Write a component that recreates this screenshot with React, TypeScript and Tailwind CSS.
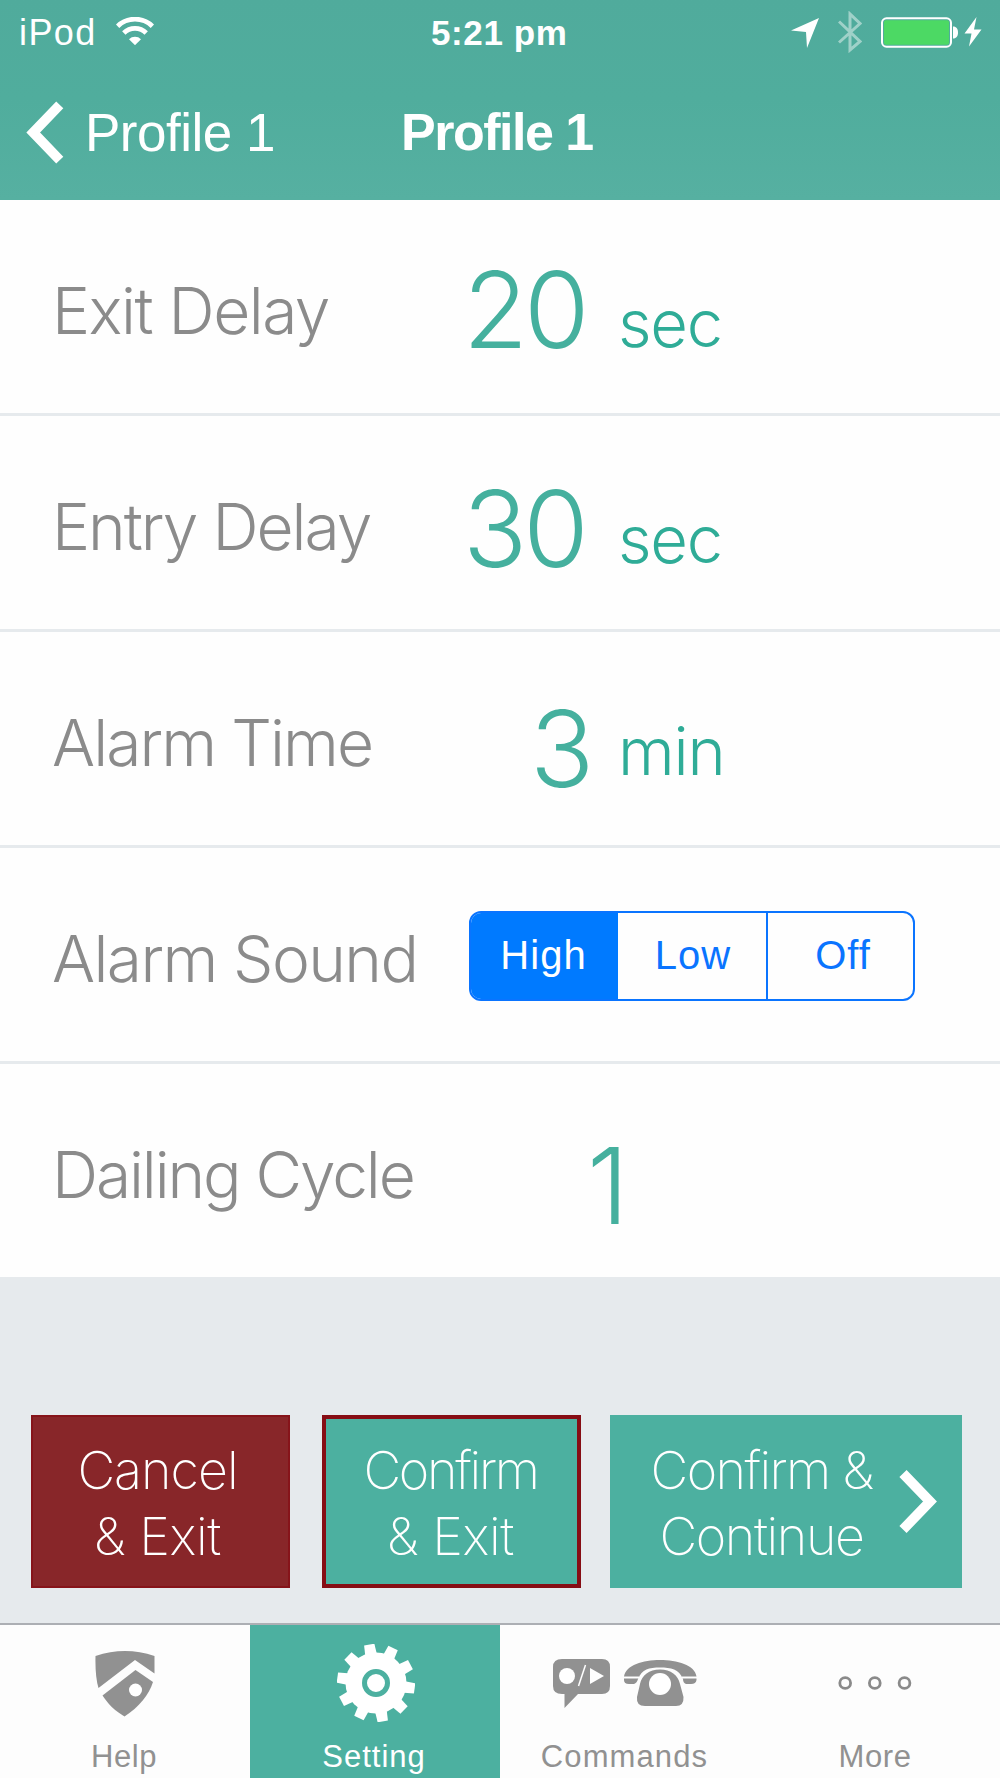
import type { ReactNode } from 'react'

const Chevron = ({ className }: { className: string }) => (
  <svg viewBox="0 0 38 64" className={className} fill="none" stroke="currentColor" strokeWidth="10">
    <path d="M34 4 7 32l27 28" />
  </svg>
)

const StatusBar = () => (
  <div className="flex h-[64px] text-white">
    <div className="flex w-[431px] pl-[19px] pt-[15px]">
      <span className="w-[97px] text-[36px] leading-none tracking-[1.4px]">iPod</span>
      <svg viewBox="0 0 38 28" className="mt-0.5 h-7 w-[38px]" fill="none" stroke="currentColor" strokeWidth="4.8">
        <path d="M1.6 9.2a25 25 0 0 1 34.8 0" />
        <path d="M7.8 16a16 16 0 0 1 22.4 0" />
        <path d="M13 22.2a8.6 8.6 0 0 1 12 0l-6 6z" fill="currentColor" stroke="none" />
      </svg>
    </div>
    <span className="w-[360px] pt-[15px] text-[35px] font-bold leading-none tracking-[0.6px]">
      5:21 pm
    </span>
    <svg viewBox="0 0 28 30" className="mt-[18px] h-[30px] w-[28px]" fill="currentColor">
      <path d="M28 0 16 30 15 14 0 12.5z" />
    </svg>
    <svg viewBox="0 0 24 42" className="ml-[19px] mt-[11px] h-[42px] w-6 opacity-45" fill="none" stroke="currentColor" strokeWidth="3">
      <path d="M1 10.5 22 30.5 12 39V3l10 9.5L1 31.5" />
    </svg>
    <svg viewBox="0 0 104 32" className="ml-[18px] mt-[17px] h-8 w-[104px]">
      <rect x="2" y="1.3" width="69" height="28.4" rx="4.5" fill="none" stroke="white" strokeWidth="2" />
      <rect x="4" y="3.3" width="65" height="24.4" rx="2" fill="#4cd964" />
      <path d="M73 9.5c3.5 0 5 2.5 5 6s-1.5 6-5 6z" fill="white" />
      <path d="M96.5 0 84.5 16.5h7L89 29.5l12.500-17h-7.500z" fill="white" />
    </svg>
  </div>
)

const Header = () => (
  <header className="h-[200px] bg-linear-to-b from-[#50ab9c] via-[#50ad9d] to-[#56b0a1] text-white">
    <StatusBar />
    <div className="flex">
      <Chevron className="ml-[26px] mt-[37px] h-[63px] w-[38px]" />
      <span className="ml-[21px] w-[316px] pt-[42px] text-[53px] leading-none tracking-[-0.5px]">Profile 1</span>
      <h1 className="pt-[42px] text-[52px] font-bold leading-none tracking-[-1.5px]">Profile 1</h1>
    </div>
  </header>
)

const Row = ({ label, labelClass, children }: { label: string; labelClass: string; children: ReactNode }) => (
  <div className="flex h-[216px] border-b-[3px] border-[#e6eaed] bg-[#fefefe] font-['Inter',sans-serif] font-light last:h-[213px] last:border-b-0">
    <div className={`w-[463px] whitespace-nowrap pl-[52px] pt-[79px] text-[64px] leading-none text-[#8b8b8b] ${labelClass}`}>
      {label}
    </div>
    {children}
  </div>
)

const Value = ({ className, children }: { className: string; children: ReactNode }) => (
  <span className={`text-[106px] font-light leading-none tracking-[-4px] text-[#45b09e] ${className}`}>{children}</span>
)

const Unit = ({ className, children }: { className: string; children: ReactNode }) => (
  <span className={`text-[65px] font-light leading-none tracking-[-1.2px] text-[#2fac97] ${className}`}>{children}</span>
)

const SoundPicker = () => (
  <div className="ml-[6px] mt-[63px] flex h-[90px] w-[446px] overflow-hidden rounded-xl border-[2.5px] border-[#0a74ff] font-['Liberation_Sans',sans-serif] text-[40px] leading-[85px] font-normal tracking-[1px] text-[#0a74ff]">
    <div className="w-[147px] bg-[#007aff] pr-[2px] text-center text-white">High</div>
    <div className="w-[150px] border-r-2 border-[#0a74ff] pl-[2px] text-center">Low</div>
    <div className="flex-1 pl-[5px] text-center">Off</div>
  </div>
)

const buttonText = "font-['Inter',sans-serif] text-[52px] font-extralight leading-[66px] text-center"

const Actions = () => (
  <div className="flex h-[346px] bg-[#e6eaed] pl-[31px] pt-[138px] text-white">
    <button className={`h-[173px] w-[259px] border-2 border-[#86141a] bg-[#882629] pr-[6px] pt-[4px] ${buttonText}`}>
      <span className="tracking-[-1px]">Cancel</span>
      <br />
      <span className="tracking-[-0.4px]">& Exit</span>
    </button>
    <button className={`ml-8 h-[173px] w-[259px] border-4 border-[#860d14] bg-[#4cb0a0] pr-[2px] pt-[4px] ${buttonText}`}>
      <span className="tracking-[-2.3px]">Confirm</span>
      <br />
      <span className="tracking-[-0.4px]">& Exit</span>
    </button>
    <button className={`ml-[29px] flex h-[173px] w-[352px] items-center bg-[#4cb0a0] pl-[38px] ${buttonText}`}>
      <span className="w-[227px] whitespace-nowrap pt-[4px]">
        <span className="tracking-[-1.6px]">Confirm &</span>
        <br />
        <span className="tracking-[-1.4px]">Continue</span>
      </span>
      <Chevron className="ml-[24px] h-[65px] w-[38px] rotate-180" />
    </button>
  </div>
)

const HelpIcon = () => (
  <svg viewBox="0 0 60 66" className="ml-[2px] mt-[2px] h-[66px] w-[60px]" fill="#919191">
    <path d="M0.5 5Q30-5 59.500 5V22.500L40 9 3.500 37Q0 26 0.500 5z" />
    <path d="M7.500 44.500 40.500 19 58 31C54 44 44 56 29.500 65.500 20 60 13 53 7.500 44.500z" />
    <circle cx="40.5" cy="39" r="6.5" fill="white" />
  </svg>
)

const TEETH = [0, 36, 72, 108, 144, 180, 216, 252, 288, 324]

const GearIcon = () => (
  <svg viewBox="-39 -39 78 78" className="ml-[4px] h-[78px] w-[78px]" fill="white">
    {TEETH.map((angle) => (
      <path key={angle} d="M-5.200-39H5.200L6-26H-6z" transform={`rotate(${angle - 10})`} />
    ))}
    <circle r="30.5" />
    <circle r="11.5" fill="none" stroke="#4cb0a0" strokeWidth="5" />
  </svg>
)

const CommandsIcon = () => (
  <svg viewBox="0 0 144 50" className="mt-[2px] h-[50px] w-[144px]" fill="#919191">
    <path d="M9 0H49Q57 0 57 8V27Q57 35 49 35H25L11.500 49V35H9Q0 35 0 27V8Q0 0 9 0z" />
    <circle cx="14" cy="17" r="8" fill="white" />
    <path d="M32.500 6 25.500 27" stroke="white" strokeWidth="1.5" />
    <path d="M37 9 51 17 37 25z" fill="white" />
    <path d="M71 17.500C73 6 90 1 107 1s35 5 36.500 16.500V21Q143 25 138 25H133Q130 24 130 20C126 10 118 8.500 107 8.500S89 10 85 20Q84 24 81 25H76Q71 25 71 21z" />
    <path d="M71 18.500H86M129 18.500H144" stroke="white" strokeWidth="1.8" />
    <path d="M107 10.500C118 10.500 125 16 127 25L130.500 38Q131 47 123 47H92Q83 47 84 38L87 25C89 16 96 10.500 107 10.500z" />
    <circle cx="107" cy="25" r="11" fill="white" />
  </svg>
)

const MoreIcon = () => (
  <svg viewBox="0 0 74 14" className="h-3.5 w-[74px]" fill="none" stroke="#8a8a8a" strokeWidth="2.8">
    <circle cx="7.2" cy="7" r="5.4" />
    <circle cx="36.8" cy="7" r="5.4" />
    <circle cx="66.5" cy="7" r="5.4" />
  </svg>
)

const Tab = ({ label, className, children }: { label: string; className: string; children: ReactNode }) => (
  <div className={`flex w-[250px] flex-col items-center text-[31px] leading-none ${className}`}>
    <div className="flex h-[115px] items-center">{children}</div>
    <span className="pt-px">{label}</span>
  </div>
)

const TabBar = () => (
  <nav className="flex h-[155px] border-t-2 border-[#acafb4] bg-[#fdfdfd] text-[#919191]">
    <Tab label="Help" className="pr-[2px] tracking-[0.6px]">
      <HelpIcon />
    </Tab>
    <Tab label="Setting" className="bg-[#4cb0a0] pr-[2px] text-white tracking-[1px]">
      <GearIcon />
    </Tab>
    <Tab label="Commands" className="pr-[1px] tracking-[1.1px]">
      <CommandsIcon />
    </Tab>
    <Tab label="More" className="tracking-[0.6px]">
      <MoreIcon />
    </Tab>
  </nav>
)

const App = () => (
  <div className="h-[1778px] w-[1000px] overflow-hidden bg-[#e6eaed] font-['Liberation_Sans',sans-serif]">
    <Header />
    <main>
      <section>
        <Row label="Exit Delay" labelClass="tracking-[-1.5px]">
          <Value className="w-[155px] pt-[57px]">20</Value>
          <Unit className="pt-[91px]">sec</Unit>
        </Row>
        <Row label="Entry Delay" labelClass="tracking-[-2px]">
          <Value className="w-[155px] pt-[60px]">30</Value>
          <Unit className="pt-[91px]">sec</Unit>
        </Row>
        <Row label="Alarm Time" labelClass="tracking-[-1.9px]">
          <Value className="w-[155px] pl-[67px] pt-[64px]">3</Value>
          <Unit className="pt-[87px]">min</Unit>
        </Row>
        <Row label="Alarm Sound" labelClass="tracking-[-1.6px]">
          <SoundPicker />
        </Row>
        <Row label="Dailing Cycle" labelClass="tracking-[-2.1px]">
          <Value className="pl-[124px] pt-[69px]">1</Value>
        </Row>
      </section>
      <Actions />
    </main>
    <TabBar />
  </div>
)

export default App
